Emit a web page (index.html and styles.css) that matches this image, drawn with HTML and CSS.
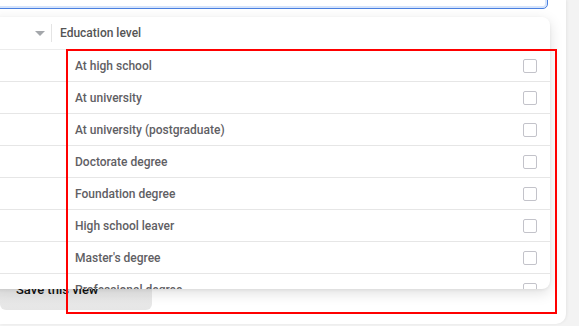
FILE: index.html
```html
<!DOCTYPE html>
<html lang="en">
<head>
    <meta charset="UTF-8">
    <meta name="viewport" content="width=device-width, initial-scale=1.0">
    <title>Education level filter</title>
    <link rel="stylesheet" href="styles.css">
</head>
<body>
    <div class="sheet">
        <div class="search-box"></div>

        <div class="sheet-footer">
            <button class="save-btn">Save this view</button>
        </div>

        <div class="dropdown">
            <div class="dropdown-header">
                <div class="sort-cell">
                    <span class="sort-arrow"></span>
                </div>
                <div class="header-title">Education level</div>
            </div>
            <ul class="option-list">
                <li class="option"><span>At high school</span><span class="checkbox"></span></li>
                <li class="option"><span>At university</span><span class="checkbox"></span></li>
                <li class="option"><span>At university (postgraduate)</span><span class="checkbox"></span></li>
                <li class="option"><span>Doctorate degree</span><span class="checkbox"></span></li>
                <li class="option"><span>Foundation degree</span><span class="checkbox"></span></li>
                <li class="option"><span>High school leaver</span><span class="checkbox"></span></li>
                <li class="option"><span>Master's degree</span><span class="checkbox"></span></li>
                <li class="option"><span>Professional degree</span><span class="checkbox"></span></li>
            </ul>
        </div>

        <div class="highlight"></div>
    </div>
</body>
</html>
```

FILE: styles.css
```css
* {
    box-sizing: border-box;
    margin: 0;
    padding: 0;
}

body {
    background-color: #f3f3f3;
    font-family: 'Roboto', 'Liberation Sans', sans-serif;
    width: 579px;
    height: 326px;
    overflow: hidden;
}

.sheet {
    display: flow-root;
    position: relative;
    width: 566px;
    height: 324px;
    background-color: #fff;
    border-bottom-right-radius: 10px;
    box-shadow: 1px 0 3px rgba(0, 0, 0, 0.06);
}

.search-box {
    width: 558px;
    height: 30px;
    margin-top: -21px;
    margin-left: -10px;
    background-color: #fff;
    border: 1px solid #4a80e0;
    border-radius: 5px;
    box-shadow: inset 0 0 0 2px #d6e4fb;
}

.sheet-footer {
    padding-top: 270px;
}

.save-btn {
    width: 152px;
    height: 26px;
    padding-left: 16px;
    padding-bottom: 16px;
    text-align: left;
    border: none;
    border-radius: 0 0 6px 6px;
    background: linear-gradient(#ececec, #e6e6e6);
    color: #111;
    font-family: 'Roboto', 'Liberation Sans', sans-serif;
    font-size: 13px;
    font-weight: 500;
    line-height: 12px;
}

/* popover list */
.dropdown {
    position: absolute;
    top: 17px;
    left: -10px;
    width: 560px;
    height: 272px;
    background-color: #fff;
    border-radius: 8px;
    box-shadow: 0 4px 14px rgba(0, 0, 0, 0.13), 0 1px 3px rgba(0, 0, 0, 0.06);
    overflow: hidden;
}

.dropdown-header {
    display: flex;
    align-items: center;
    height: 33px;
    border-bottom: 1px solid #ececec;
}

.sort-cell {
    display: flex;
    align-items: center;
    justify-content: flex-end;
    width: 62px;
    height: 18px;
    padding-right: 6px;
    border-right: 1px solid #e4e4e4;
}

.sort-arrow {
    width: 0;
    height: 0;
    border-left: 5px solid transparent;
    border-right: 5px solid transparent;
    border-top: 5px solid #a4a7ab;
}

.header-title {
    padding-left: 8px;
    font-size: 12px;
    font-weight: 500;
    color: #555;
}

.option-list {
    list-style: none;
}

.option {
    display: flex;
    align-items: center;
    justify-content: space-between;
    height: 32px;
    padding-left: 85px;
    padding-right: 13px;
    border-bottom: 1px solid #e6e6e6;
    font-size: 12px;
    font-weight: 500;
    color: #5f6064;
}

.checkbox {
    width: 14px;
    height: 14px;
    border: 1px solid #c3c3ca;
    border-radius: 2px;
}

.highlight {
    position: absolute;
    top: 49px;
    left: 66px;
    width: 491px;
    height: 265px;
    border: 2px solid #f00;
}
```
